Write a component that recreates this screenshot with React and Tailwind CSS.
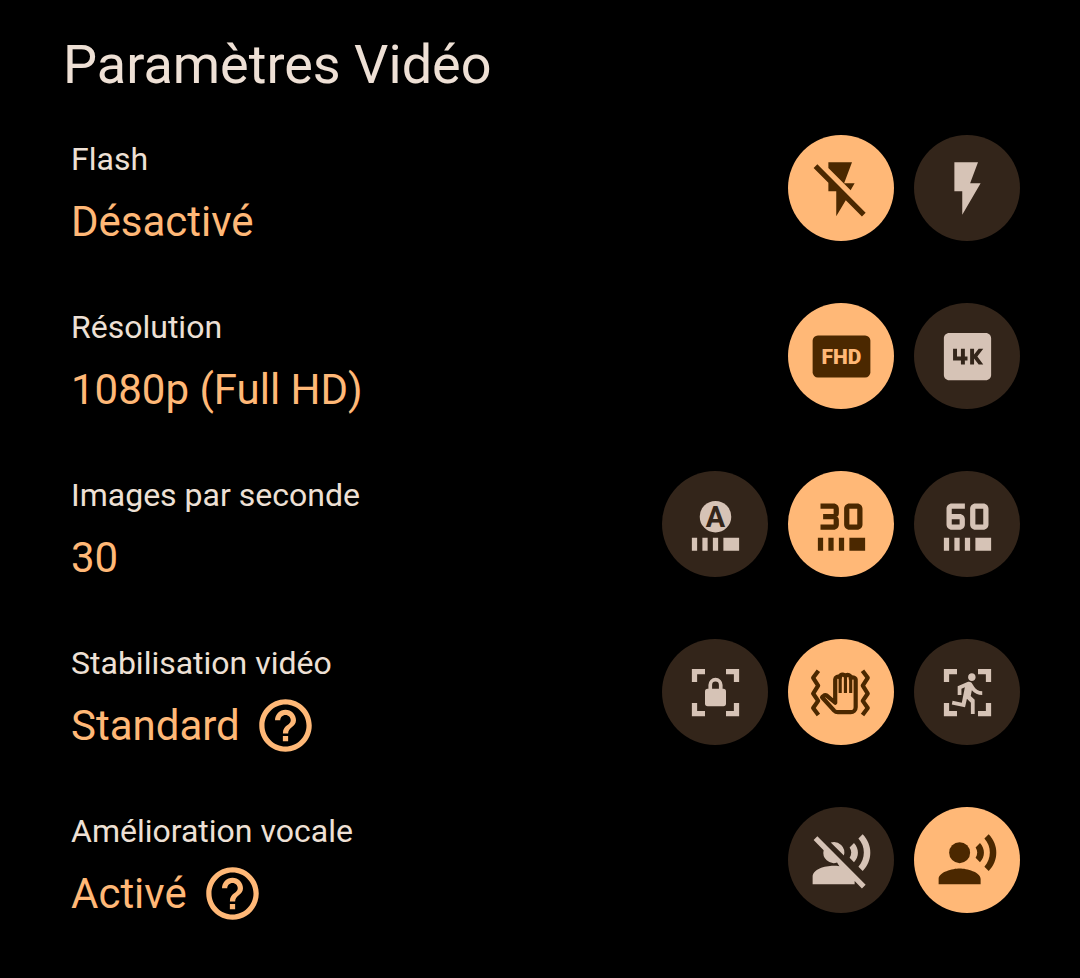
import { useState } from 'react';
import { Md30FpsSelect, Md4K, Md60FpsSelect, MdHelpOutline, MdRecordVoiceOver } from 'react-icons/md';

const corners = 'M3 8V3h5v2H5v3zM16 3h5v5h-2V5h-3zM3 16h2v3h3v2H3zM19 16h2v5h-5v-2h3z';

function Icon({ children }) {
  return (
    <svg viewBox="0 0 24 24" fill="currentColor" className="size-full" aria-hidden="true">
      {children}
    </svg>
  );
}

function FlashOffIcon() {
  return (
    <Icon>
      <path d="M16 2l-3 8h4l-1.53 2.63L7 4.15V2zM19.78 22.63l-6.15-6.15L10 22.6V13H7V9.85L1.38 4.23 2.8 2.8l18.4 18.4z" />
    </Icon>
  );
}

function FlashOnIcon() {
  return (
    <Icon>
      <path d="M7 2v11h3v9l7-12h-4l3-8z" />
    </Icon>
  );
}

function FullHdIcon() {
  return (
    <Icon>
      <rect x="1" y="4" width="22" height="16" rx="2" />
      <text x="12" y="15" textAnchor="middle" fontSize="8" className="fill-[#ffb877] font-[Roboto,sans-serif] font-black">FHD</text>
    </Icon>
  );
}

function AutoFpsIcon() {
  return (
    <Icon>
      <circle cx="12" cy="9" r="6" />
      <text x="12" y="13" textAnchor="middle" fontSize="11" className="fill-[#33251a] font-[Roboto,sans-serif] font-bold">A</text>
      <path d="M3 17h2v5H3zM7 17h2v5H7zM11 17h2v5h-2zM15 17h6v5h-6z" />
    </Icon>
  );
}

function LockedIcon() {
  return (
    <Icon>
      <path d={corners} />
      <rect x="8" y="10.6" width="8" height="6.6" rx="1" />
      <path d="M10 11.5V9.1a2 2 0 0 1 4 0v2.4" fill="none" stroke="currentColor" strokeWidth="1.4" />
    </Icon>
  );
}

function ShakyHandIcon() {
  return (
    <Icon>
      <g fill="none" stroke="currentColor" strokeWidth="1.6" strokeLinejoin="round">
        <path d="M3.2 3.7L1.2 6.4l1.9 3-1.9 3 1.9 2.8-1.9 2.7 2 2.7" />
        <path d="M20 3.7l2 2.7-1.9 3 1.9 3-1.9 2.8 1.9 2.7-2 2.7" />
        <path d="M9.6 15.9V7a1.1 1.1 0 0 1 1.8-.8 1.1 1.1 0 0 1 2.1-.4 1.1 1.1 0 0 1 2 .8 1.1 1.1 0 0 1 1.9.9V17.6a1.9 1.9 0 0 1-1.9 1.9H10.6a2 2 0 0 1-1.4-.6L4.6 13.8l.6-.5a1 1 0 0 1 1.2-.1z" />
        <path d="M11.5 6v6.2M13.5 5.8v6.4M15.5 6.6v5.6" strokeWidth="1.2" />
      </g>
    </Icon>
  );
}

function ActiveIcon() {
  return (
    <Icon>
      <path d={corners} />
      <path
        transform="translate(3.94 3.64) scale(.72)"
        d="M13.49 5.48c1.1 0 2-.9 2-2s-.9-2-2-2-2 .9-2 2 .9 2 2 2zm-3.6 13.9l1-4.4 2.1 2v6h2v-7.5l-2.1-2 .6-3c1.3 1.5 3.3 2.5 5.5 2.5v-2c-1.9 0-3.5-1-4.3-2.4l-1-1.6c-.4-.6-1-1-1.7-1-.3 0-.5.1-.8.1l-5.2 2.2v4.7h2v-3.4l1.8-.7-1.6 8.1-4.9-1-.4 2 7 1.4z"
      />
    </Icon>
  );
}

function VoiceOffIcon() {
  return (
    <Icon>
      <path d="M19.78 22.63L17 19.85V21H1v-2.8c0-2.8 4.5-4.2 8-4.2.8 0 1.5.05 2.2.15L10.3 12.8A4 4 0 0 1 5.2 8.05L1.38 4.23 2.8 2.8l18.4 18.4zM12.9 10.1L7.9 5.15a4 4 0 0 1 5 4.95z" />
      <path d="M16.76 5.36l-1.68 1.69c.84 1.18.84 2.71 0 3.89l1.68 1.69c2.02-2.02 2.02-5.07 0-7.27zM20.07 2l-1.63 1.63c2.77 3.02 2.77 7.56 0 10.74L20.07 16c3.9-3.89 3.91-9.95 0-14z" />
    </Icon>
  );
}

const reglages = [
  {
    id: 'flash',
    titre: 'Flash',
    initial: 0,
    options: [
      { label: 'Désactivé', icon: FlashOffIcon },
      { label: 'Activé', icon: FlashOnIcon },
    ],
  },
  {
    id: 'resolution',
    titre: 'Résolution',
    initial: 0,
    options: [
      { label: '1080p (Full HD)', icon: FullHdIcon },
      { label: '4K', icon: Md4K },
    ],
  },
  {
    id: 'fps',
    titre: 'Images par seconde',
    initial: 1,
    options: [
      { label: 'Auto', icon: AutoFpsIcon },
      { label: '30', icon: Md30FpsSelect },
      { label: '60', icon: Md60FpsSelect },
    ],
  },
  {
    id: 'stabilisation',
    titre: 'Stabilisation vidéo',
    initial: 1,
    aide: true,
    options: [
      { label: 'Verrouillée', icon: LockedIcon },
      { label: 'Standard', icon: ShakyHandIcon },
      { label: 'Active', icon: ActiveIcon },
    ],
  },
  {
    id: 'voix',
    titre: 'Amélioration vocale',
    initial: 1,
    aide: true,
    options: [
      { label: 'Désactivé', icon: VoiceOffIcon },
      { label: 'Activé', icon: MdRecordVoiceOver },
    ],
  },
];

function Reglage({ reglage }) {
  const [actif, setActif] = useState(reglage.initial);

  return (
    <section className="flex items-start justify-between">
      <div>
        <h2 id={reglage.id} className="text-[32px] leading-[48px] text-[#eee0d5]">{reglage.titre}</h2>
        <div className="flex h-[76px] items-center gap-[14px] text-[42px] text-[#ffb877]">
          <p>{reglage.options[actif].label}</p>
          {reglage.aide && (
            <button type="button" aria-label={'Aide : ' + reglage.titre}>
              <MdHelpOutline className="size-[63px]" />
            </button>
          )}
        </div>
      </div>

      <div role="group" aria-labelledby={reglage.id} className="flex gap-5">
        {reglage.options.map((option, i) => (
          <button
            key={option.label}
            type="button"
            aria-label={option.label}
            aria-pressed={i === actif}
            onClick={() => setActif(i)}
            className={'flex size-[106px] items-center justify-center rounded-full ' + (
              i === actif ? 'bg-[#ffb877] text-[#4b2800]' : 'bg-[#33251a] text-[#d6c3b6]'
            )}
          >
            <span className="block size-[63px]">
              <option.icon className="size-full" />
            </span>
          </button>
        ))}
      </div>
    </section>
  );
}

export default function App() {
  return (
    <main className="min-h-screen bg-black pt-[33px] pr-[60px] pb-8 pl-[71px] font-[Roboto,sans-serif]">
      <h1 className="-ml-2 text-[54px] leading-[64px] text-[#eee0d5]">Paramètres Vidéo</h1>
      <div className="mt-[38px] flex flex-col gap-11">
        {reglages.map((reglage) => (
          <Reglage key={reglage.id} reglage={reglage} />
        ))}
      </div>
    </main>
  );
}
